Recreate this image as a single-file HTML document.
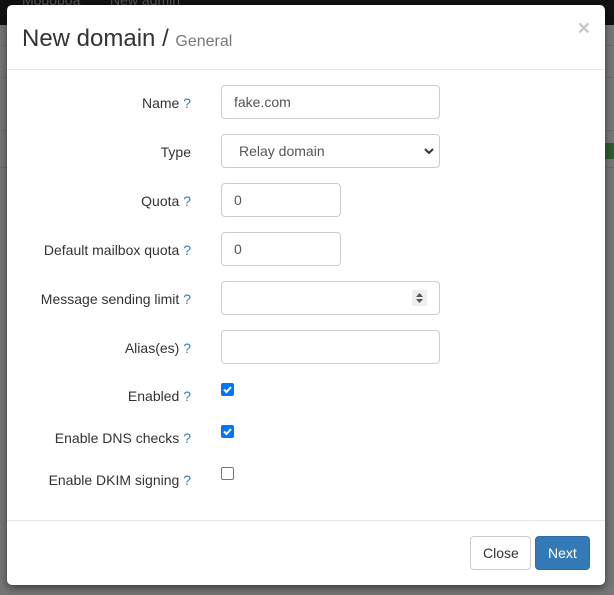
<!DOCTYPE html>
<html><head><style>
*{box-sizing:border-box}
body{margin:0;width:614px;height:595px;background:#777;font-family:"Liberation Sans",sans-serif;font-size:14px;color:#333;position:relative;overflow:hidden}
.topbar{position:absolute;left:0;top:0;width:614px;height:25px;background:#111}
.topbar span{position:absolute;top:-8px;color:#555;font-size:14px}
.band{position:absolute;left:0;width:614px;height:1px;background:#6a6a6a}
.green{position:absolute;left:605px;top:143px;width:9px;height:16px;background:#2f5d2f}
.modal{position:absolute;left:7px;top:5px;width:598px;height:580px;background:#fff;border-radius:5px;box-shadow:0 3px 9px rgba(0,0,0,.5)}
.hdr{height:65px;border-bottom:1px solid #e5e5e5;position:relative}
.hdr h4{margin:0;position:absolute;left:15px;top:20px;font-size:24px;font-weight:normal;color:#333}
.hdr small{font-size:16px;color:#777}
.x{position:absolute;right:15px;top:12px;font-size:21px;font-weight:bold;color:#c8c8c8}
.row{position:absolute;left:0;width:598px}
.lbl{position:absolute;right:414px;top:10px;white-space:nowrap;text-align:right}
.q{color:#337ab7}
.inp{position:absolute;left:214px;top:0;height:34px;border:1px solid #ccc;border-radius:4px;padding:8px 12px 6px;color:#555;background:#fff}
.w{width:219px}.s{width:120px}
.cb{position:absolute;left:214px;top:2px;width:13px;height:13px;border-radius:2px}
.on{background:#0075ff}
.off{border:1px solid #767676;background:#fff}
.ftr{position:absolute;left:0;top:515px;width:598px;border-top:1px solid #e5e5e5;height:65px}
.btn{position:absolute;top:15px;height:34px;border-radius:4px;padding:8px 12px 6px;font-size:14px}
</style></head><body>
<div class="topbar"><span style="left:22px">Modoboa</span><span style="left:110px">New admin</span></div>
<div class="band" style="top:45px"></div><div class="band" style="top:77px"></div><div class="band" style="top:130px"></div><div class="band" style="top:167px"></div>
<div class="green"></div>
<div class="modal">
<div class="hdr"><h4>New domain / <small>General</small></h4><div class="x">×</div></div>
<div class="row" style="top:80px"><div class="lbl">Name <span class="q">?</span></div><div class="inp w">fake.com</div></div>
<div class="row" style="top:129px"><div class="lbl">Type</div><div class="inp w" style="padding-left:17px">Relay domain<svg style="position:absolute;right:5px;top:12px" width="10" height="8" viewBox="0 0 10 8"><path d="M1 2l4 4 4-4" stroke="#333" stroke-width="2" fill="none"/></svg></div></div>
<div class="row" style="top:178px"><div class="lbl">Quota <span class="q">?</span></div><div class="inp s">0</div></div>
<div class="row" style="top:227px"><div class="lbl">Default mailbox quota <span class="q">?</span></div><div class="inp s">0</div></div>
<div class="row" style="top:276px"><div class="lbl">Message sending limit <span class="q">?</span></div><div class="inp w"><div style="position:absolute;right:12px;top:8px;width:15px;height:16px;background:#eee"><svg width="15" height="16" viewBox="0 0 15 16"><path d="M4 7l3.5-4 3.5 4zM4 9l3.5 4 3.5-4z" fill="#555"/></svg></div></div></div>
<div class="row" style="top:325px"><div class="lbl">Alias(es) <span class="q">?</span></div><div class="inp w"></div></div>
<div class="row" style="top:376px"><div class="lbl" style="top:7px">Enabled <span class="q">?</span></div><div class="cb on"><svg width="13" height="13" viewBox="0 0 13 13"><path d="M3 6.5l2.5 2.5 4.5-5" stroke="#fff" stroke-width="2" fill="none"/></svg></div></div>
<div class="row" style="top:418px"><div class="lbl" style="top:7px">Enable DNS checks <span class="q">?</span></div><div class="cb on"><svg width="13" height="13" viewBox="0 0 13 13"><path d="M3 6.5l2.5 2.5 4.5-5" stroke="#fff" stroke-width="2" fill="none"/></svg></div></div>
<div class="row" style="top:460px"><div class="lbl" style="top:7px">Enable DKIM signing <span class="q">?</span></div><div class="cb off"></div></div>
<div class="ftr">
<div class="btn" style="left:463px;width:61px;border:1px solid #ccc;color:#333;background:#fff">Close</div>
<div class="btn" style="left:528px;width:55px;border:1px solid #2e6da4;color:#fff;background:#337ab7">Next</div>
</div>
</div>
</body></html>
